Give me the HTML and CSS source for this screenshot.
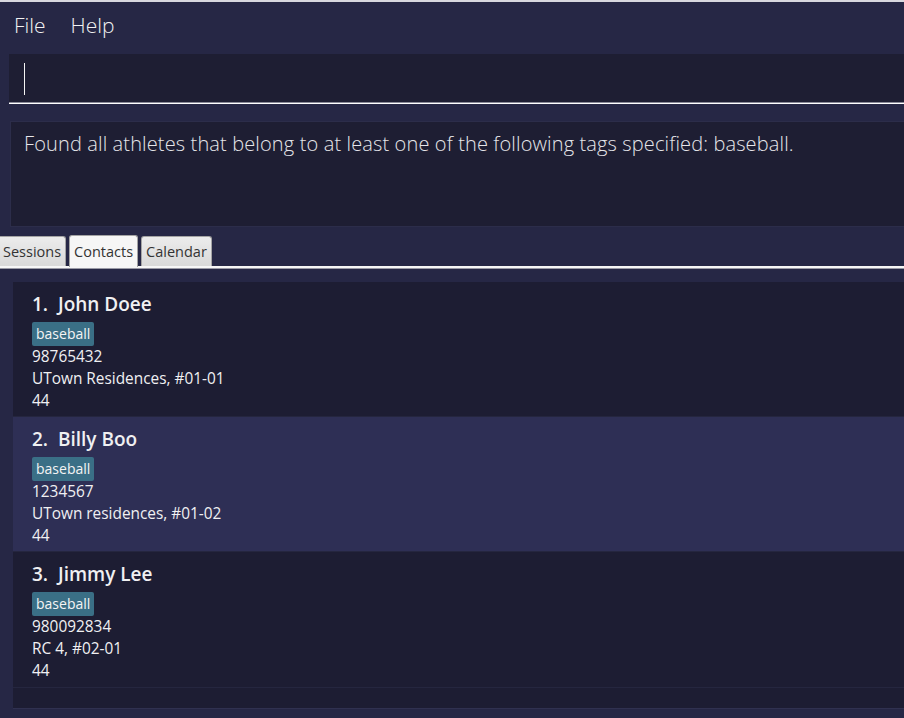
FILE: index.html
```html
<!DOCTYPE html>
<html>
<head>
<meta charset="utf-8">
<link rel="stylesheet" href="styles.css">
</head>
<body>
<div class="app">
  <nav class="menubar">
    <span class="menu-item">File</span>
    <span class="menu-item">Help</span>
  </nav>
  <div class="command-box">
    <span class="caret"></span>
  </div>
  <div class="result-box">
    <p class="result-text">Found all athletes that belong to at least one of the following tags specified: baseball.</p>
  </div>
  <div class="tabs">
    <span class="tab">Sessions</span>
    <span class="tab tab-active">Contacts</span>
    <span class="tab">Calendar</span>
  </div>
  <div class="list-wrap">
    <ul class="list">
      <li class="card">
        <div class="name">1.&nbsp; John Doee</div>
        <div class="tags"><span class="tag">baseball</span></div>
        <div class="line">98765432</div>
        <div class="line">UTown Residences, #01-01</div>
        <div class="line">44</div>
      </li>
      <li class="card card-selected">
        <div class="name">2.&nbsp; Billy Boo</div>
        <div class="tags"><span class="tag">baseball</span></div>
        <div class="line">1234567</div>
        <div class="line">UTown residences, #01-02</div>
        <div class="line">44</div>
      </li>
      <li class="card">
        <div class="name">3.&nbsp; Jimmy Lee</div>
        <div class="tags"><span class="tag">baseball</span></div>
        <div class="line">980092834</div>
        <div class="line">RC 4, #02-01</div>
        <div class="line">44</div>
      </li>
    </ul>
  </div>
</div>
</body>
</html>
```
FILE: styles.css
```css
* { box-sizing: border-box; }
html, body {
  margin: 0;
  padding: 0;
  width: 904px;
  height: 718px;
  overflow: hidden;
  background: #262745;
}
body {
  font-family: "Open Sans", "Noto Sans", sans-serif;
  color: #f0f0f0;
}
.app {
  height: 718px;
  border-top: 2px solid #d8d8de;
  display: flex;
  flex-direction: column;
}
.menubar {
  height: 46px;
  display: flex;
  align-items: center;
  gap: 25px;
  padding-left: 14px;
  padding-bottom: 1px;
}
.menu-item {
  font-size: 21px;
  font-weight: 300;
  color: #f2f2f2;
}
.command-box {
  margin-top: 6px;
  margin-left: 9px;
  height: 50px;
  background: #1e1e33;
  border-bottom: 1px solid #ffffff;
  box-shadow: inset 0 -1px 0 #8a8a98;
  padding: 9px 0 0 15px;
}
.caret {
  display: block;
  width: 1px;
  height: 32px;
  background: #f4f4f4;
}
.result-box {
  margin-top: 17px;
  margin-left: 10px;
  height: 106px;
  background: #1e1e33;
  border: 1px solid #2c2d4a;
  border-right: none;
  padding: 8px 0 0 13px;
}
.result-text {
  margin: 0;
  font-size: 20px;
  font-weight: 300;
  color: #e6e6ea;
  letter-spacing: 0.13px;
  white-space: nowrap;
}
.tabs {
  margin-top: 10px;
  height: 31px;
  display: flex;
  align-items: flex-end;
  gap: 3px;
  border-bottom: 2px solid #f6f6f6;
  box-shadow: 0 1px 0 #9a9aa6;
}
.tab {
  height: 30px;
  padding: 0 4px;
  display: flex;
  align-items: center;
  font-size: 14.5px;
  color: #333333;
  background: linear-gradient(#ececec, #d9d9d9);
  border: 1px solid #a4a4a4;
  border-bottom: none;
  border-radius: 3px 3px 0 0;
}
.tab:first-child { border-left: none; border-top-left-radius: 0; padding-left: 3px; }
.tab-active {
  height: 32px;
  margin-bottom: -1px;
  padding: 0 4px;
  background: #f6f6f6;
}
.list-wrap {
  margin-top: 14px;
  margin-left: 13px;
  height: 427px;
  background: #1d1d33;
  border-bottom: 1px solid #303150;
}
.list {
  list-style: none;
  margin: 0;
  padding: 0;
  border-bottom: 1px solid #25263f;
}
.card {
  height: 135px;
  padding: 10px 0 0 19px;
  background: #1d1d33;
  border-bottom: 1px solid #25263f;
}
.card:last-child { border-bottom: none; }
.card-selected { background: #2e2f55; }
.name {
  font-size: 19px;
  font-weight: 600;
  line-height: 24px;
  color: #f0f0f2;
}
.tags {
  margin-top: 6px;
  display: flex;
}
.tag {
  background: #3a6f86;
  color: #f4f4f4;
  font-size: 14px;
  line-height: 24px;
  padding: 0 4px;
  border-radius: 2px;
}
.line {
  font-size: 15.4px;
  line-height: 22px;
  color: #f0f0f2;
}
```
